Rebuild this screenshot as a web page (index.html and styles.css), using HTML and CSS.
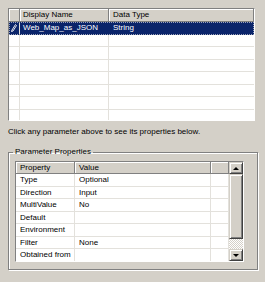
FILE: index.html
```html
<!DOCTYPE html>
<html>
<head>
  <title>Parameters</title>
  <link rel="stylesheet" href="styles.css">
</head>
<body>
  <div class="param-grid">
    <div class="row head">
      <span class="rowhead"></span>
      <span>Display Name</span>
      <span>Data Type</span>
    </div>
    <div class="row selected">
      <span class="rowhead">
        <svg width="6" height="8" viewBox="0 0 6 8"><path d="M4.5 0.5 L5.5 1.5 L2 7 L0.5 7.5 L1 6 Z" fill="none" stroke="#e8e8f0" stroke-width="1"/></svg>
      </span>
      <span>Web_Map_as_JSON</span>
      <span>String</span>
    </div>
    <div class="row"><span class="rowhead"></span><span></span><span></span></div>
    <div class="row"><span class="rowhead"></span><span></span><span></span></div>
    <div class="row"><span class="rowhead"></span><span></span><span></span></div>
    <div class="row"><span class="rowhead"></span><span></span><span></span></div>
    <div class="row"><span class="rowhead"></span><span></span><span></span></div>
    <div class="row"><span class="rowhead"></span><span></span><span></span></div>
    <div class="row"><span class="rowhead"></span><span></span><span></span></div>
  </div>

  <p class="hint">Click any parameter above to see its properties below.</p>

  <fieldset class="props">
    <legend>Parameter Properties</legend>
    <div class="props-grid">
      <div class="props-table">
        <div class="prow head"><span>Property</span><span>Value</span><span></span></div>
        <div class="prow"><span>Type</span><span>Optional</span><span></span></div>
        <div class="prow"><span>Direction</span><span>Input</span><span></span></div>
        <div class="prow"><span>MultiValue</span><span>No</span><span></span></div>
        <div class="prow"><span>Default</span><span></span><span></span></div>
        <div class="prow"><span>Environment</span><span></span><span></span></div>
        <div class="prow"><span>Filter</span><span>None</span><span></span></div>
        <div class="prow"><span>Obtained from</span><span></span><span></span></div>
      </div>
      <div class="scrollbar">
        <div class="sb-btn"><i class="arrow-up"></i></div>
        <div class="sb-thumb"></div>
        <div class="sb-track"></div>
        <div class="sb-btn"><i class="arrow-down"></i></div>
      </div>
    </div>
  </fieldset>
</body>
</html>
```

FILE: styles.css
```css
html, body {
  width: 265px;
  height: 282px;
  overflow: hidden;
}

body {
  margin: 0;
  padding: 8px 7px 0 8px;
  box-sizing: border-box;
  background-color: #d4d0c8;
  font-family: "Liberation Sans", Arial, sans-serif;
  font-size: 8px;
  color: #000;
}

/* top grid */
.param-grid {
  height: 113px;
  margin-right: 3px;
  box-sizing: border-box;
  border: 1px solid;
  border-color: #808080 #fff #fff #808080;
  background-color: #fff;
  overflow: hidden;
}

.row {
  display: grid;
  grid-template-columns: 11px 89px 1fr;
  height: 12.5px;
}

.row span {
  box-sizing: border-box;
  border-right: 1px solid #e3e1dc;
  border-bottom: 1px solid #e3e1dc;
  padding-left: 3px;
  line-height: 12px;
  white-space: nowrap;
  overflow: hidden;
}

.row span:last-child {
  border-right: none;
  padding-left: 4px;
}

.row .rowhead {
  padding-left: 0;
}

.row.head {
  height: 13px;
}

.row.head span {
  background-color: #d4d0c8;
  border-right: 1px solid #808080;
  border-bottom: 1px solid #808080;
  box-shadow: inset 1px 1px 0 #fff;
}

.row.head span:last-child {
  border-right: 1px solid #808080;
}

.row.selected {
  background-color: #0a246a;
  color: #fff;
  outline: 1px dotted #9ca3b8;
  outline-offset: -1px;
}

.row.selected span {
  border-color: transparent;
}

.row.selected .rowhead {
  display: flex;
  align-items: center;
  justify-content: center;
  border-right: 1px solid #e3e1dc;
}

/* hint */
.hint {
  margin: 6px 0 10px;
  line-height: 10px;
}

/* properties group */
.props {
  margin: 0;
  padding: 4px 13px 7px 6px;
  border: 1px solid #808080;
  box-shadow: inset 1px 1px 0 #fff, 1px 1px 0 #fff;
}

.props legend {
  padding: 0 2px;
  margin-left: -2px;
  line-height: 10px;
}

.props-grid {
  display: flex;
  height: 101px;
  box-sizing: border-box;
  border: 1px solid;
  border-color: #808080 #fff #fff #808080;
  background-color: #fff;
}

.props-table {
  width: 213px;
  overflow: hidden;
}

.prow {
  display: grid;
  grid-template-columns: 59px 136px 18px;
  height: 12.5px;
}

.prow span {
  box-sizing: border-box;
  border-right: 1px solid #e3e1dc;
  border-bottom: 1px solid #e3e1dc;
  padding-left: 4px;
  line-height: 12px;
  white-space: nowrap;
  overflow: hidden;
}

.prow.head {
  height: 12px;
}

.prow.head span {
  background-color: #d4d0c8;
  border-right: 1px solid #808080;
  border-bottom: 1px solid #808080;
  box-shadow: inset 1px 1px 0 #fff;
}

/* scrollbar */
.scrollbar {
  display: flex;
  flex-direction: column;
  width: 14px;
}

.sb-btn,
.sb-thumb {
  box-sizing: border-box;
  background-color: #d4d0c8;
  border: 1px solid;
  border-color: #d4d0c8 #404040 #404040 #d4d0c8;
  box-shadow: inset 1px 1px 0 #fff, inset -1px -1px 0 #808080;
}

.sb-btn {
  height: 12px;
  display: flex;
  align-items: center;
  justify-content: center;
}

.sb-thumb {
  height: 65px;
}

.sb-track {
  flex: 1;
  background: repeating-conic-gradient(#fff 0 25%, #d4d0c8 0 50%) 0 0 / 2px 2px;
}

.arrow-up {
  width: 0;
  height: 0;
  border-left: 3px solid transparent;
  border-right: 3px solid transparent;
  border-bottom: 3px solid #000;
}

.arrow-down {
  width: 0;
  height: 0;
  border-left: 3px solid transparent;
  border-right: 3px solid transparent;
  border-top: 3px solid #000;
}
```
